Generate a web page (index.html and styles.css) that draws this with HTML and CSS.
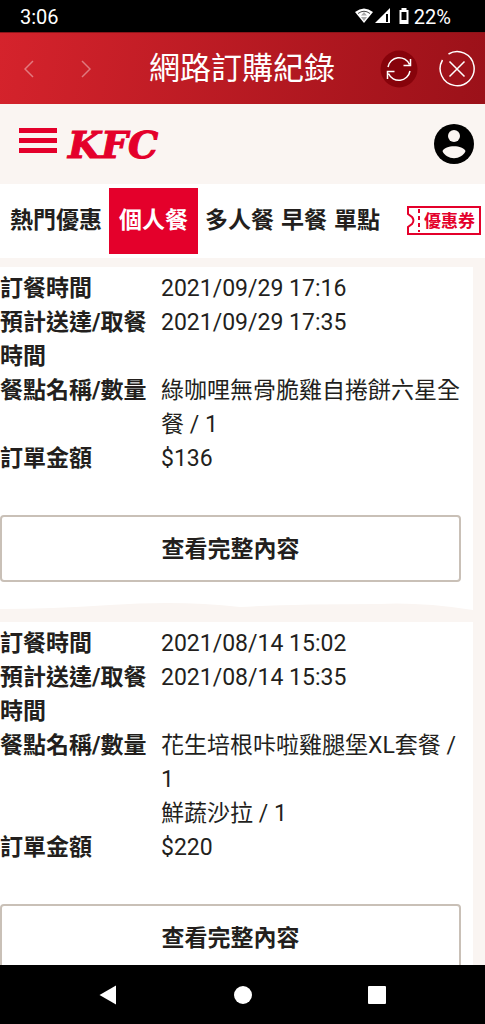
FILE: index.html
```html
<!DOCTYPE html>
<html lang="zh-Hant">
<head>
<meta charset="utf-8">
<meta name="viewport" content="width=device-width, initial-scale=1">
<title>網路訂購紀錄</title>
<link rel="stylesheet" href="styles.css">
</head>
<body>
<div class="status">
  <span>3:06</span>
  <div class="status-icons">
    <svg width="54" height="18" viewBox="0 0 54 18" fill="none" aria-hidden="true">
      <path d="M0 4Q9-3 18 4L9 15Z" fill="#fff"/>
      <path d="M3 5.500Q9 1 15 5.500" stroke="#444" stroke-width="1"/>
      <path d="M9 4l3 3.500H6zM9 13L6 9h6z" fill="#aaa"/>
      <path d="M20 15L35 0V15Z" fill="#fff"/>
      <path d="M32 6v8" stroke="#000" stroke-width="2"/>
      <path d="M46.500 0h5v2h2v14h-9V2h2z" fill="#fff"/>
      <path d="M46.500 4h5v8h-5z" fill="#000"/>
    </svg>
    <span>22%</span>
  </div>
</div>
<div class="titlebar">
  <div class="history">
    <button aria-label="上一頁"><svg width="10" height="18" viewBox="0 0 10 18"><path d="M9 1L1 9l8 8"/></svg></button>
    <button aria-label="下一頁"><svg width="10" height="18" viewBox="0 0 10 18"><path d="M1 1l8 8-8 8"/></svg></button>
  </div>
  <h1>網路訂購紀錄</h1>
  <div class="actions">
    <button aria-label="重新整理"><svg width="38" height="38" viewBox="0 0 38 38">
      <circle class="disc" cx="19" cy="19" r="18.500"/>
      <path d="M8 17A11.300 11.300 0 0 1 29.500 14.500M30.500 9v6.500h-7M30 21A11.300 11.300 0 0 1 8.500 23.500M7.500 29v-7.500h7"/>
    </svg></button>
    <button aria-label="關閉"><svg width="38" height="38" viewBox="0 0 38 38">
      <path d="M10.500 4A17 17 0 1 1 4.500 10M11.500 11.500l15 15M26.500 11.500l-15 15"/>
    </svg></button>
  </div>
</div>
<header class="brand">
  <button aria-label="選單"><svg width="38" height="26" viewBox="0 0 38 26" fill="#e4002b"><path d="M0 0h38v5H0zM0 10h38v5H0zM0 20h38v5H0z"/></svg></button>
  <a class="logo" href="#">KFC</a>
  <button class="account" aria-label="我的帳戶"><svg width="40" height="40" viewBox="0 0 40 40">
    <circle cx="20" cy="20" r="20"/>
    <circle cx="20" cy="12" r="6" fill="#faf5f2"/>
    <path d="M8.500 27C11 20.500 29 20.500 31.500 27C28 36.500 12 36.500 8.500 27Z" fill="#faf5f2"/>
  </svg></button>
</header>
<nav class="menu">
  <a href="#">熱門優惠</a>
  <a class="active" href="#">個人餐</a>
  <a href="#">多人餐</a>
  <a href="#">早餐</a>
  <a href="#">單點</a>
  <a class="coupon" href="#"><svg width="74" height="29" viewBox="0 0 74 29" fill="none" stroke="#e4002b" stroke-width="2" aria-hidden="true">
    <path d="M1 1H73V28H1V21L5 18Q8 14.500 5 11L1 8Z"/><path d="M12 3v23" stroke-dasharray="4 3"/>
  </svg><span>優惠券</span></a>
</nav>
<main>
  <section class="card">
    <table>
      <tr><th scope="row">訂餐時間</th><td>2021/09/29 17:16</td></tr>
      <tr><th scope="row">預計送達/取餐時間</th><td>2021/09/29 17:35</td></tr>
      <tr><th scope="row">餐點名稱/數量</th><td>綠咖哩無骨脆雞自捲餅六星全餐 / 1</td></tr>
      <tr><th scope="row">訂單金額</th><td>$136</td></tr>
    </table>
    <button class="detail">查看完整內容</button>
  </section>
  <svg class="torn" viewBox="0 0 473 20" preserveAspectRatio="none" aria-hidden="true"><path d="M0 0H473V8Q420 0 380 2Q290 2 240 5Q180-2 110 3Q50 7 0 7Z" fill="#fff"/></svg>
  <section class="card">
    <table>
      <tr><th scope="row">訂餐時間</th><td>2021/08/14 15:02</td></tr>
      <tr><th scope="row">預計送達/取餐時間</th><td>2021/08/14 15:35</td></tr>
      <tr><th scope="row">餐點名稱/數量</th><td>花生培根咔啦雞腿堡XL套餐 / 1<br>鮮蔬沙拉 / 1</td></tr>
      <tr><th scope="row">訂單金額</th><td>$220</td></tr>
    </table>
    <button class="detail">查看完整內容</button>
  </section>
</main>
<div class="system">
  <button aria-label="返回"><svg width="20" height="22" viewBox="0 0 20 22"><path d="M18 1.500v19L1.500 11z"/></svg></button>
  <button aria-label="主畫面"><svg width="20" height="20" viewBox="0 0 20 20"><circle cx="10" cy="10" r="9"/></svg></button>
  <button aria-label="最近使用"><svg width="20" height="20" viewBox="0 0 20 20"><rect x="1" y="1" width="18" height="18" rx="1"/></svg></button>
</div>
</body>
</html>
```
FILE: styles.css
```css
* { box-sizing: border-box; }
body {
  margin: 0;
  height: 100vh;
  display: flex;
  flex-direction: column;
  overflow: hidden;
  background: #faf5f2;
  color: #231f1d;
  font: 23px/34px Roboto, "Noto Sans CJK TC", sans-serif;
}
button { margin: 0; padding: 0; border: 0; background: none; color: inherit; font: inherit; }
svg { display: block; }
a { color: inherit; text-decoration: none; }

.status {
  flex: none;
  height: 32px;
  padding: 2px 34px 0 20px;
  display: flex;
  align-items: center;
  justify-content: space-between;
  background: #000;
  color: #fff;
  font-size: 20px;
}
.status-icons { display: flex; align-items: center; gap: 5px; }

.titlebar {
  flex: none;
  height: 72px;
  padding: 0 9px 0 24px;
  display: grid;
  grid-template-columns: 1fr auto 1fr;
  align-items: center;
  background: linear-gradient(100deg, #d5232c, #9b1119);
  border-top: 1px solid #8c1419;
  color: #fff;
}
.titlebar h1 { margin: 0 16px 0 0; font-size: 31px; font-weight: 400; }
.titlebar path { fill: none; stroke: #fff; stroke-width: 1.5; }
.history { display: flex; gap: 47px; opacity: .4; }
.actions { display: flex; justify-content: flex-end; gap: 20px; }
.disc { fill: #87030b; }

.brand {
  flex: none;
  height: 80px;
  padding: 0 11px 0 19px;
  display: flex;
  align-items: center;
  gap: 11px;
}
.brand > button:first-child { padding-bottom: 6px; }
.logo { color: #e4002b; font: italic bold 38px "DejaVu Serif", serif; -webkit-text-stroke: 1px #e4002b; }
.account { margin-left: auto; }

.menu {
  flex: none;
  height: 74px;
  padding: 4px 4px 4px 10px;
  display: flex;
  gap: 7px;
  background: #fff;
  font-weight: 700;
  line-height: 66px;
  white-space: nowrap;
}
.menu .active { padding: 0 10px; background: #e4002b; color: #fff; }
.coupon { margin-left: auto; align-self: center; display: grid; color: #e4002b; font-size: 17px; line-height: 31px; }
.coupon > * { grid-area: 1 / 1; }
.coupon span { justify-self: end; padding-right: 6px; }

main { flex: 1; min-height: 0; overflow: hidden; padding: 9px 12px 0 0; }
.card { padding: 5px 12px 20px 0; background: #fff; }
table { width: 100%; border-collapse: collapse; table-layout: fixed; }
th, td { padding: 0; text-align: left; vertical-align: top; }
th { width: 161px; }
.detail {
  display: block;
  width: 100%;
  height: 67px;
  margin-top: 39px;
  padding-top: 3px;
  border: 2px solid #c9c0b7;
  border-radius: 4px;
  font-weight: 700;
}
.torn { width: 100%; height: 20px; }

.system {
  flex: none;
  height: 59px;
  padding: 0 98px;
  display: flex;
  align-items: center;
  justify-content: space-between;
  background: #000;
}
.system svg { fill: #fff; }
```
